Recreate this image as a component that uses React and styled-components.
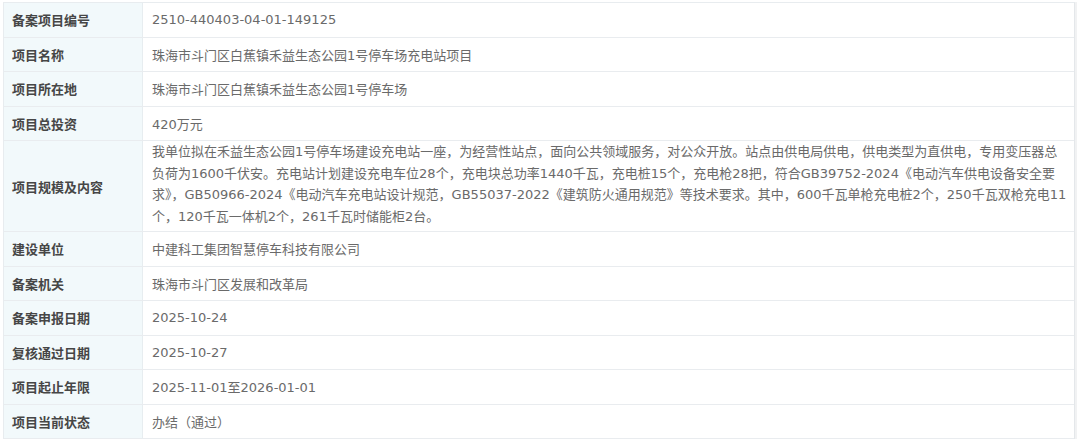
import React from 'react';
import styled, { createGlobalStyle } from 'styled-components';

const GlobalStyle = createGlobalStyle`
  html, body {
    margin: 0;
    padding: 0;
    background: #ffffff;
  }
  body {
    font-family: "DejaVu Sans", "Noto Sans CJK SC", sans-serif;
  }
`;

// Styled components
const Page = styled.div`
  width: 1080px;
  height: 442px;
  padding: 2px 5px 0 3px;
  box-sizing: border-box;
  background: #fff;
`;

const Table = styled.div`
  display: flex;
  flex-direction: column;
  border-top: 1px solid #e8ecef;
  border-left: 1px solid #e8ecef;
  border-right: 1px solid #e4e7ea;
  box-shadow: 2px 0 0 #f1f2f3;
`;

const Row = styled.div`
  display: grid;
  grid-template-columns: 139px 1fr;
  height: ${(p) => (p.$tall ? '91px' : '34.5px')};
  box-sizing: border-box;
  border-bottom: 1px solid #e9ecef;
`;

const Label = styled.div`
  display: flex;
  align-items: center;
  padding-left: 8px;
  background: #f2f9fb;
  border-right: 1px solid #e7edf0;
  font-family: "Noto Sans CJK SC", sans-serif;
  font-size: 13px;
  font-weight: 700;
  color: #464646;
`;

const Value = styled.div`
  display: flex;
  flex-direction: column;
  justify-content: ${(p) => (p.$tall ? 'flex-start' : 'center')};
  padding-left: 9px;
  font-size: 13px;
  color: #6a6a6a;
  white-space: nowrap;
`;

const Line = styled.span`
  display: block;
  line-height: 21.7px;
`;

const rows = [
  { label: '备案项目编号', value: '2510-440403-04-01-149125' },
  { label: '项目名称', value: '珠海市斗门区白蕉镇禾益生态公园1号停车场充电站项目' },
  { label: '项目所在地', value: '珠海市斗门区白蕉镇禾益生态公园1号停车场' },
  { label: '项目总投资', value: '420万元' },
  {
    label: '项目规模及内容',
    lines: [
      '我单位拟在禾益生态公园1号停车场建设充电站一座，为经营性站点，面向公共领域服务，对公众开放。站点由供电局供电，供电类型为直供电，专用变压器总',
      '负荷为1600千伏安。充电站计划建设充电车位28个，充电块总功率1440千瓦，充电桩15个，充电枪28把，符合GB39752-2024《电动汽车供电设备安全要',
      '求》，GB50966-2024《电动汽车充电站设计规范，GB55037-2022《建筑防火通用规范》等技术要求。其中，600千瓦单枪充电桩2个，250千瓦双枪充电11',
      '个，120千瓦一体机2个，261千瓦时储能柜2台。',
    ],
  },
  { label: '建设单位', value: '中建科工集团智慧停车科技有限公司' },
  { label: '备案机关', value: '珠海市斗门区发展和改革局' },
  { label: '备案申报日期', value: '2025-10-24' },
  { label: '复核通过日期', value: '2025-10-27' },
  { label: '项目起止年限', value: '2025-11-01至2026-01-01' },
  { label: '项目当前状态', value: '办结（通过）' },
];

const App = () => {
  return (
    <Page>
      <GlobalStyle />
      <Table>
        {rows.map((r) => (
          <Row key={r.label} $tall={!!r.lines}>
            <Label>{r.label}</Label>
            <Value $tall={!!r.lines}>
              {r.lines ? r.lines.map((l, i) => <Line key={i}>{l}</Line>) : r.value}
            </Value>
          </Row>
        ))}
      </Table>
    </Page>
  );
};

export default App;
